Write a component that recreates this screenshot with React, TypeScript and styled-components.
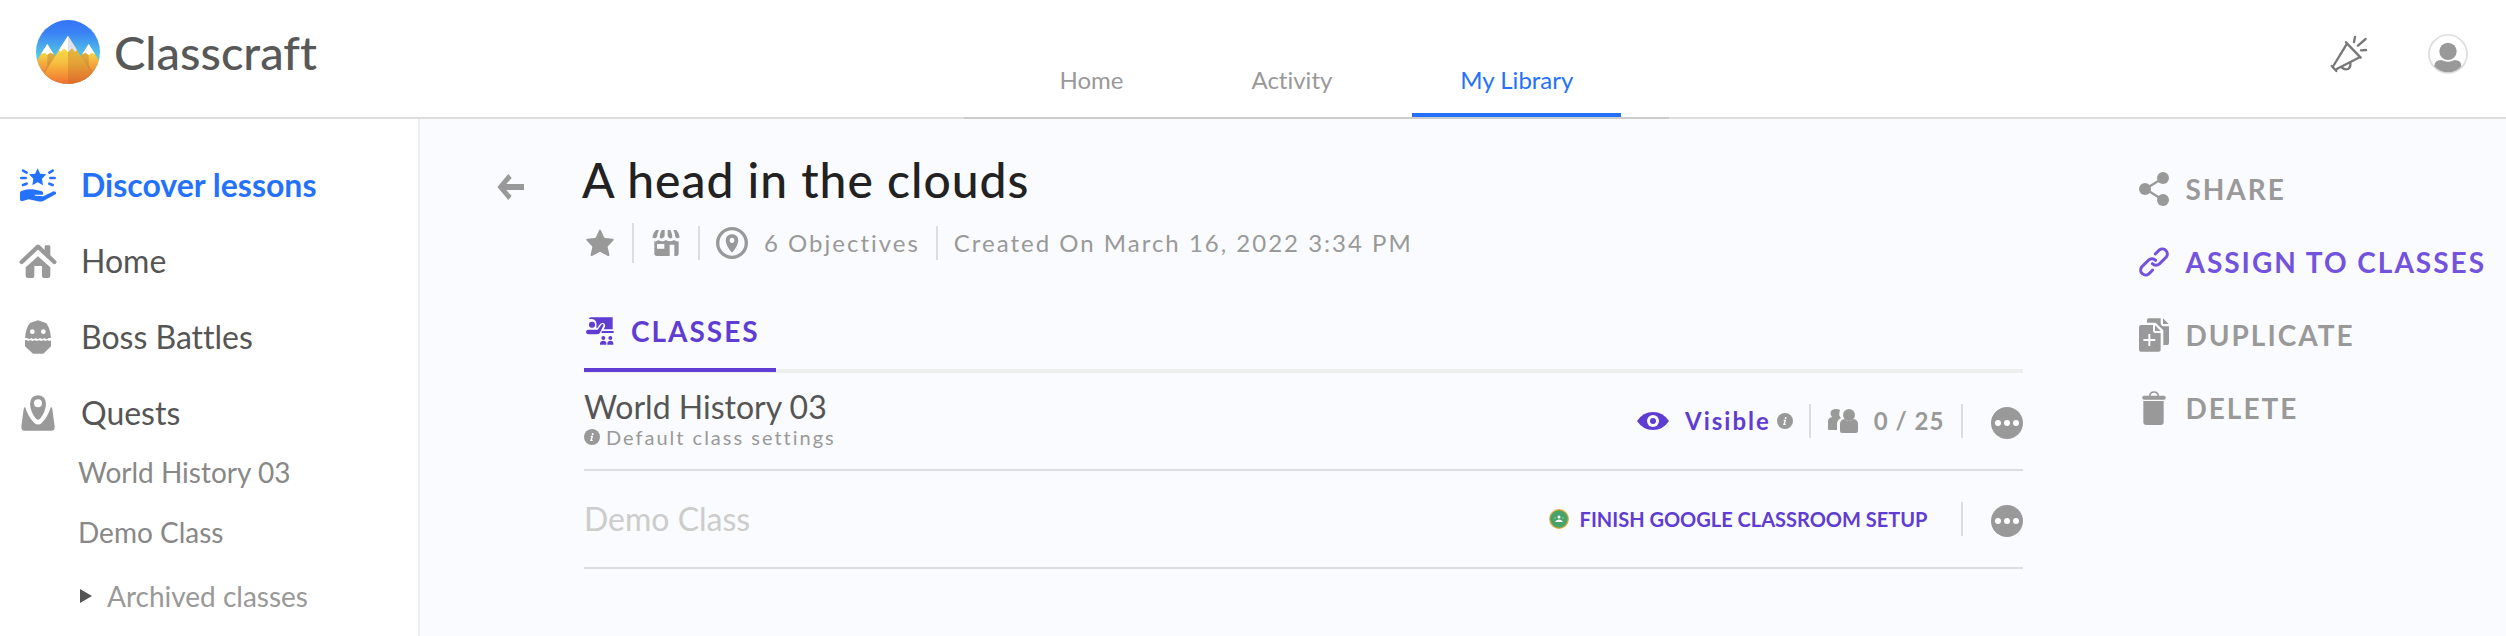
import React from "react";
import styled, { createGlobalStyle } from "styled-components";

const grey = "#999999";
const purple = "#5f3dd3";
const blue = "#2472fb";

const GlobalStyle = createGlobalStyle`
  *, *::before, *::after { box-sizing: border-box; }
  body {
    margin: 0;
    background: #fafbfe;
    font-family: Lato, "Liberation Sans", sans-serif;
    font-variant-ligatures: none;
    color: #555555;
  }
  a { color: inherit; text-decoration: none; }
  button {
    font: inherit; font-variant-ligatures: none; color: inherit; letter-spacing: inherit;
    background: none; border: 0; padding: 0; cursor: pointer;
  }
  h1, h2, ul, p { margin: 0; padding: 0; }
  ul { list-style: none; }
  svg { display: block; flex: none; }
`;

const Page = styled.div`
  display: flex;
  flex-direction: column;
  min-height: 100vh;
`;

const Header = styled.header`
  display: flex;
  justify-content: space-between;
  height: 119px;
  padding: 0 38px 0 36px;
  background: #ffffff;
  border-bottom: 2px solid #dddddd;
`;

const Brand = styled.a`
  display: flex;
  align-items: center;
  align-self: flex-start;
  gap: 14px;
  margin-top: 20px;
  font-size: 47px;
  line-height: 64px;
  font-weight: 500;
  color: #585858;
`;

const Tabs = styled.nav`
  display: flex;
  align-self: flex-end;
  gap: 32px;
  padding: 0 48px;
  margin-bottom: -2px;
  border-bottom: 2px solid #cccccc;
`;

const Tab = styled.a<{ $active?: boolean }>`
  padding: 0 48px 18px;
  font-size: 24px;
  line-height: 30px;
  color: ${(p) => (p.$active ? blue : grey)};
  border-bottom: 4px solid ${(p) => (p.$active ? blue : "transparent")};
`;

const HeaderTools = styled.div`
  display: flex;
  align-items: center;
  align-self: flex-start;
  gap: 60px;
  margin-top: 34px;
  padding-left: 14px;
`;

const Body = styled.div`
  display: flex;
  flex: 1;
`;

const Sidebar = styled.aside`
  flex: none;
  width: 420px;
  padding: 28px 18px 0;
  background: #ffffff;
  border-right: 2px solid #eeeeee;
`;

const SideLink = styled.a<{ $active?: boolean }>`
  display: flex;
  align-items: center;
  gap: 23px;
  padding: 18px 0;
  font-size: 32px;
  line-height: 40px;
  font-weight: ${(p) => (p.$active ? 700 : 400)};
  color: ${(p) => (p.$active ? blue : "#555555")};
`;

const SideIcon = styled.span<{ $active?: boolean }>`
  display: flex;
  justify-content: center;
  width: 40px;
  color: ${(p) => (p.$active ? blue : grey)};
`;

const SubList = styled.ul`
  display: flex;
  flex-direction: column;
  gap: 26px;
  padding: 4px 0 0 60px;
  font-size: 28px;
  line-height: 34px;
  color: #888888;
`;

const Archived = styled.button`
  display: flex;
  align-items: center;
  gap: 15px;
  padding: 4px 0 0 2px;
  color: ${grey};
`;

const Main = styled.main`
  display: grid;
  flex: 1;
  grid-template-columns: 87px minmax(0, 1fr) auto;
  align-items: start;
  padding: 32px 20px 32px 77px;
`;

const Back = styled.button`
  justify-self: start;
  margin-top: 23px;
  color: ${grey};
`;

const Content = styled.section`
  margin-right: 116px;
`;

const Title = styled.h1`
  font-size: 48px;
  line-height: 58px;
  font-weight: 500;
  letter-spacing: 1px;
  color: #222222;
  margin-left: -2px;
`;

const Meta = styled.div`
  display: flex;
  align-items: center;
  gap: 16px;
  margin-top: 14px;
  padding-left: 2px;
  font-size: 24px;
  line-height: 30px;
  letter-spacing: 2px;
  color: ${grey};
`;

const MetaBadges = styled.span`
  display: flex;
  align-items: center;
  gap: 18px;
`;

const Divider = styled.span<{ $tall?: boolean }>`
  flex: none;
  width: 2px;
  height: ${(p) => (p.$tall ? 40 : 34)}px;
  background: #dcdde0;
`;

const SectionTabs = styled.div`
  display: flex;
  margin-top: 51px;
  border-bottom: 4px solid #eeeeee;
`;

const SectionTab = styled.button`
  display: flex;
  align-items: center;
  gap: 17px;
  margin-bottom: -3px;
  padding: 0 16px 20px 2px;
  font-size: 28px;
  line-height: 34px;
  font-weight: 700;
  letter-spacing: 2px;
  color: ${purple};
  border-bottom: 4px solid ${purple};
`;

const ClassRow = styled.li`
  display: flex;
  align-items: center;
  justify-content: space-between;
  min-height: 98px;
  border-bottom: 2px solid #dcdde0;
`;

const ClassName = styled.h2<{ $muted?: boolean }>`
  font-size: 32px;
  line-height: 36px;
  font-weight: 400;
  color: ${(p) => (p.$muted ? "#cccccc" : "#555555")};
`;

const ClassInfo = styled.div`
  padding-bottom: 4px;
`;

const ClassNote = styled.p`
  display: flex;
  align-items: center;
  gap: 6px;
  font-size: 20px;
  line-height: 24px;
  letter-spacing: 2px;
  color: ${grey};
`;

const RowTools = styled.div`
  display: flex;
  align-items: center;
`;

const Visibility = styled.button`
  display: flex;
  align-items: center;
  gap: 16px;
  font-size: 24px;
  line-height: 30px;
  font-weight: 700;
  letter-spacing: 2px;
  color: ${purple};
`;

const InfoSlot = styled.span`
  margin: 0 16px 0 6px;
  color: ${grey};
`;

const Students = styled.span`
  display: flex;
  align-items: center;
  gap: 16px;
  margin: 0 17px;
  font-size: 24px;
  line-height: 30px;
  font-weight: 700;
  letter-spacing: 1px;
  color: ${grey};
`;

const Setup = styled.button`
  display: flex;
  align-items: center;
  gap: 11px;
  margin-right: 34px;
  font-size: 20px;
  line-height: 24px;
  font-weight: 700;
  color: ${purple};
`;

const More = styled.button`
  margin: 4px 0 0 28px;
`;

const Actions = styled.ul`
  display: flex;
  flex-direction: column;
  gap: 39px;
  margin-top: 21px;
`;

const Action = styled.button<{ $accent?: boolean }>`
  display: flex;
  align-items: center;
  gap: 16px;
  font-size: 28px;
  line-height: 34px;
  font-weight: 700;
  letter-spacing: 2px;
  color: ${(p) => (p.$accent ? "#7352dd" : grey)};
`;

const Logo = () => (
  <svg width="64" height="64" viewBox="109 60 192 192" aria-hidden="true">
    <defs>
      <linearGradient id="sky" x1="0" y1="0" x2="0" y2="1">
        <stop offset="0" stopColor="#3474f7" />
        <stop offset="0.2" stopColor="#3a82f5" />
        <stop offset="0.55" stopColor="#52c6e6" />
      </linearGradient>
      <linearGradient id="rock" gradientUnits="userSpaceOnUse" x1="0" y1="145" x2="0" y2="252">
        <stop offset="0" stopColor="#f3dc4a" />
        <stop offset="0.4" stopColor="#f7bf40" />
        <stop offset="1" stopColor="#f0702f" />
      </linearGradient>
      <linearGradient id="rockSide" gradientUnits="userSpaceOnUse" x1="0" y1="150" x2="0" y2="225">
        <stop offset="0" stopColor="#f8e24a" />
        <stop offset="1" stopColor="#ef7c34" />
      </linearGradient>
      <clipPath id="disc"><circle cx="205" cy="156" r="96" /></clipPath>
    </defs>
    <g clipPath="url(#disc)">
      <rect x="109" y="60" width="192" height="192" fill="url(#sky)" />
      <path d="M143 132 L90 216 V252 H196 V216Z M267 132 L214 216 V252 H320 V216Z" fill="url(#rockSide)" />
      <path d="M143 132 L196 216 V252 L125 240 L143 195Z M267 132 L214 216 L250 252 H296 L267 195Z" fill="#a8702c" opacity="0.35" />
      <path d="M143 132 L124 162 L135 158 L143 165 L151 158 L162 162Z M267 132 L248 162 L258 158 L267 165 L276 158 L286 162Z" fill="#ffffff" />
      <path d="M205 107 L114 252 H296Z" fill="url(#rock)" />
      <path d="M205 107 L296 252 H205Z" fill="#b35c20" opacity="0.28" />
      <path d="M205 107 L178 150 L184 156 L193 145 L205 157Z" fill="#ffffff" />
      <path d="M205 107 L232 150 L226 156 L217 145 L205 157Z" fill="#e3e0ee" />
    </g>
  </svg>
);

const MegaphoneIcon = () => (
  <svg width="38" height="38" viewBox="688 105 114 114" fill="none" stroke="#777777" strokeWidth="7" strokeLinecap="round" strokeLinejoin="round" aria-hidden="true">
    <path d="M736 127 L780 173 M739 131 L698 198 M777 172 L708 207 M693 198 L707 213" />
    <path d="M724 203 Q732 210 742 207 Q751 202 749 188" />
    <path d="M763 111 L760 126 M795 117 L772 137 M781 151 L796 150" />
  </svg>
);

const AvatarIcon = () => (
  <svg width="40" height="40" viewBox="984 101 120 120" aria-hidden="true">
    <circle cx="1044" cy="161" r="57" fill="#ffffff" stroke="#dddddd" strokeWidth="5" />
    <circle cx="1044" cy="153" r="26" fill={grey} />
    <path d="M1003 198 Q1003 179 1024 179 Q1044 190 1064 179 Q1084 179 1084 198 Q1068 216 1044 216 Q1020 216 1003 198Z" fill={grey} />
  </svg>
);

const DiscoverIcon = () => (
  <svg width="38" height="34" viewBox="57 500 114 102" fill="currentColor" aria-hidden="true">
    <path d="M113 501 L120.500 517 L139 519 L126 532 L129 552 L113 543 L97 552 L100 532 L87 519 L105.500 517Z" />
    <path d="M69 508 L80 514 M64 530 H77 M69 551 L80 547 M158 508 L148 514 M164 530 H151 M158 551 L148 547" stroke="currentColor" strokeWidth="8" strokeLinecap="round" />
    <path d="M60 574 Q60 569 66 568 Q84 563 98 564 L124 569 Q133 574 128 580 L104 580 L105 583 L130 585 L161 570 Q170 571 168 578 L130 599 Q122 602 114 600 L86 594 L66 600 Q60 600 60 594Z" />
  </svg>
);

const HomeIcon = () => (
  <svg width="38" height="34" viewBox="57 735 114 102" fill="currentColor" aria-hidden="true">
    <path d="M65 789 L114 743 L163 789" fill="none" stroke="currentColor" strokeWidth="13" strokeLinecap="round" strokeLinejoin="round" />
    <path d="M134 760 V743 Q134 739 138 739 H147 Q151 739 151 743 V774Z" />
    <path d="M114 772 L151 805 V830 Q151 837 144 837 H132 Q126 837 126 831 V801 H103 V831 Q103 837 97 837 H84 Q77 837 77 830 V805Z" />
  </svg>
);

const BossIcon = () => (
  <svg width="26" height="34" viewBox="75 64 78 102" fill="currentColor" aria-hidden="true">
    <path d="M75 118 Q77 88 90 73 L114 65 L138 73 Q151 88 153 118 L146 118 Q140 124 133 118 Q127 124 120 118 Q114 124 107 118 Q101 124 94 118 Q88 124 81 118Z" />
    <path d="M75 125 Q80 122 84 127 Q92 123 97 127 Q104 123 110 127 Q117 123 123 127 Q130 123 136 127 Q143 123 148 127 L153 125 V143 L130 165 H99 L75 143Z" />
    <circle cx="97" cy="99" r="7" fill="#ffffff" />
    <circle cx="130" cy="99" r="7" fill="#ffffff" />
  </svg>
);

const QuestIcon = () => (
  <svg width="34" height="36" viewBox="63 288 102 108" fill="currentColor" aria-hidden="true">
    <path fillRule="evenodd" d="M114 289 Q138 291 138 315 Q136 342 119 360 Q114 364 109 360 Q92 342 90 315 Q90 291 114 289Z M114 301 A12 12 0 1 0 114 325 A12 12 0 1 0 114 301Z" />
    <path d="M75 323 Q84 352 102 371 Q114 382 126 371 Q144 352 153 323 Q156 325 157 330 L164 383 Q165 395 154 395 H74 Q63 395 64 383 L71 330 Q72 325 75 323Z" />
  </svg>
);

const TriangleIcon = () => (
  <svg width="12" height="14" viewBox="0 0 12 14" aria-hidden="true">
    <path d="M0 0 L12 7 L0 14Z" fill="#555555" />
  </svg>
);

const BackIcon = () => (
  <svg width="27" height="26" viewBox="51 132 81 78" fill="currentColor" aria-hidden="true">
    <path d="M52 171 L85 132 L95 144 L79 162 H132 V180 H79 L95 198 L85 210Z" />
  </svg>
);

const StarIcon = () => (
  <svg width="28" height="28" viewBox="317 300 86 84" fill="currentColor" aria-hidden="true">
    <path d="M360 304 L370 326 Q372 329 376 330 L399 332 L382 350 Q380 353 381 357 L386 379 L363 367 Q360 366 357 367 L334 379 L339 357 Q340 353 338 350 L321 332 L344 330 Q348 329 350 326Z" stroke="currentColor" strokeWidth="6" strokeLinejoin="round" />
  </svg>
);

const StoreIcon = () => (
  <svg width="28" height="28" viewBox="516 301 84 82" fill="currentColor" aria-hidden="true">
    <path d="M528 303 H537 Q532 314 531 324 Q525 331 517 325 Q518 312 528 303Z M545 303 H554 V322 Q548 332 539 326 Q539 314 545 303Z M563 303 H571 Q577 314 577 326 Q569 332 563 322Z M580 303 H589 Q598 312 599 325 Q592 331 586 324 Q585 314 580 303Z" />
    <path fillRule="evenodd" d="M523 337 Q529 338 535 333 Q546 341 558 333 Q570 341 582 333 Q589 338 596 337 V374 Q596 381 589 381 H583 V347 H569 V381 H530 Q523 381 523 374Z M531 345 V359 H553 V345Z" />
  </svg>
);

const ObjectiveIcon = () => (
  <svg width="32" height="32" viewBox="708 294 96 96" aria-hidden="true">
    <circle cx="756" cy="342" r="43" fill="none" stroke="currentColor" strokeWidth="10" />
    <path fill="currentColor" fillRule="evenodd" d="M756 315 Q775 317 775 335 Q772 354 756 371 Q740 354 737 335 Q737 317 756 315Z M756 326 A7 8 0 1 0 756 342 A7 8 0 1 0 756 326Z" />
  </svg>
);

const ClassesIcon = () => (
  <svg width="28" height="28" viewBox="318 555 84 84" fill="currentColor" aria-hidden="true">
    <path d="M327 561 Q327 556 332 556 H398 V592 H371 L375 584 Q377 574 368 573 Q362 573 358 579 L352 588 L349 587 Q353 563 336 561Z" />
    <rect x="327" y="569" width="18" height="18" rx="8" />
    <path d="M318 600 Q318 593 325 593 H353 L365 577 Q369 575 371 579 L360 602 Q357 607 350 607 H324 Q318 606 318 600Z" />
    <path d="M366 597 H401 V603 H364Z" />
    <circle cx="370" cy="618" r="6" />
    <circle cx="391" cy="618" r="6" />
    <path d="M360 638 V634 Q361 626 370 626 Q379 626 379 634 V638Z M382 638 V634 Q383 626 391 626 Q400 626 400 634 V638Z" />
  </svg>
);

const InfoIcon = () => (
  <svg width="16" height="16" viewBox="0 0 48 48" aria-hidden="true">
    <circle cx="24" cy="24" r="24" fill={grey} />
    <circle cx="26" cy="15" r="3" fill="#ffffff" />
    <path d="M20 22 H25 L21 34 H26" fill="none" stroke="#ffffff" strokeWidth="4" />
  </svg>
);

const EyeIcon = () => (
  <svg width="32" height="20" viewBox="0 0 32 20" aria-hidden="true">
    <path d="M0 10 Q6 1 16 1 Q26 1 32 10 Q26 19 16 19 Q6 19 0 10Z" fill="currentColor" />
    <circle cx="16" cy="10" r="6" fill="#fafbfe" />
    <circle cx="16" cy="10" r="3" fill="currentColor" />
  </svg>
);

const PeopleIcon = () => (
  <svg width="30" height="24" viewBox="0 0 30 24" fill="currentColor" aria-hidden="true">
    <path d="M8 0 Q11 0 12 1 Q10 6 13 9 Q9 11 9 15 V21 H1 Q0 21 0 20 V12 Q0 9 4 8 Q1 4 4 1 Q6 0 8 0Z" />
    <circle cx="21" cy="6" r="6" />
    <path d="M12 22 V15 Q12 11 16 10 Q21 14 26 10 Q30 11 30 15 V22 Q30 24 28 24 H14 Q12 24 12 22Z" />
  </svg>
);

const MoreIcon = () => (
  <svg width="32" height="32" viewBox="0 0 32 32" aria-hidden="true">
    <circle cx="16" cy="16" r="16" fill={grey} />
    <circle cx="7" cy="16" r="3" fill="#ffffff" />
    <circle cx="16" cy="16" r="3" fill="#ffffff" />
    <circle cx="25" cy="16" r="3" fill="#ffffff" />
  </svg>
);

const ClassroomIcon = () => (
  <svg width="20" height="20" viewBox="0 0 20 20" aria-hidden="true">
    <circle cx="10" cy="10" r="9.300" fill="#48a26a" stroke="#dcae3d" strokeWidth="1.200" />
    <circle cx="10" cy="8" r="1.500" fill="#ffffff" />
    <path d="M6 13 Q7 10.500 10 10.500 Q13 10.500 14 13Z" fill="#ffffff" />
    <circle cx="6" cy="9" r="1" fill="#78bb92" />
    <circle cx="14" cy="9" r="1" fill="#78bb92" />
  </svg>
);

const ShareIcon = () => (
  <svg width="30" height="34" viewBox="123 510 90 102" aria-hidden="true">
    <path d="M194 529 L142 561 L194 593" fill="none" stroke="currentColor" strokeWidth="7" />
    <g fill="currentColor">
      <circle cx="195" cy="528" r="18" />
      <circle cx="141" cy="561" r="18" />
      <circle cx="195" cy="594" r="18" />
    </g>
  </svg>
);

const LinkIcon = () => (
  <svg width="30" height="30" viewBox="123 738 90 90" fill="none" stroke="currentColor" strokeWidth="9" strokeLinecap="round" aria-hidden="true">
    <path d="M172 759 L184 747 A15 15 0 0 1 205 768 L185 788 A16 16 0 0 1 163 788" />
    <path d="M164 807 L152 819 A15 15 0 0 1 131 798 L151 778 A16 16 0 0 1 173 778" />
  </svg>
);

const DuplicateIcon = () => (
  <svg width="30" height="34" viewBox="123 951 90 102" fill="currentColor" aria-hidden="true">
    <path fillRule="evenodd" d="M129 972 H165 V990 Q165 996 171 996 H188 V1046 Q188 1052 182 1052 H129 Q123 1052 123 1046 V978 Q123 972 129 972Z M151 999 V1014 H136 V1020 H151 V1035 H157 V1020 H172 V1014 H157 V999Z" />
    <path d="M171 973 L188 990 H171Z M195 952 L212 969 H195Z" />
    <path d="M147 965 V957 Q147 952 152 952 H188 V968 Q190 976 198 976 H213 V1026 Q213 1032 207 1032 H196 V988 L173 965Z" />
  </svg>
);

const TrashIcon = () => (
  <svg width="30" height="34" viewBox="123 1173 90 102" fill="currentColor" aria-hidden="true">
    <path d="M155 1189 Q156 1176 168 1176 Q180 1176 181 1189" fill="none" stroke="currentColor" strokeWidth="5" />
    <rect x="133" y="1187" width="70" height="12" rx="5" />
    <path d="M136 1203 H197 V1266 Q197 1275 188 1275 H145 Q136 1275 136 1266Z" />
  </svg>
);

const sideItems = [
  { label: "Discover lessons", icon: <DiscoverIcon />, active: true },
  { label: "Home", icon: <HomeIcon /> },
  { label: "Boss Battles", icon: <BossIcon /> },
  { label: "Quests", icon: <QuestIcon /> },
];

const actions = [
  { label: "SHARE", icon: <ShareIcon /> },
  { label: "ASSIGN TO CLASSES", icon: <LinkIcon />, accent: true },
  { label: "DUPLICATE", icon: <DuplicateIcon /> },
  { label: "DELETE", icon: <TrashIcon /> },
];

export default function App() {
  return (
    <Page>
      <GlobalStyle />
      <Header>
        <Brand href="#"><Logo />Classcraft</Brand>
        <Tabs aria-label="Primary">
          <Tab href="#">Home</Tab>
          <Tab href="#">Activity</Tab>
          <Tab href="#" $active aria-current="page">My Library</Tab>
        </Tabs>
        <HeaderTools>
          <button aria-label="Announcements"><MegaphoneIcon /></button>
          <button aria-label="Profile"><AvatarIcon /></button>
        </HeaderTools>
      </Header>
      <Body>
        <Sidebar>
          <nav aria-label="Sections">
            {sideItems.map((item) => (
              <SideLink href="#" key={item.label} $active={item.active}>
                <SideIcon $active={item.active}>{item.icon}</SideIcon>
                {item.label}
              </SideLink>
            ))}
            <SubList>
              <li><a href="#">World History 03</a></li>
              <li><a href="#">Demo Class</a></li>
              <li><Archived><TriangleIcon />Archived classes</Archived></li>
            </SubList>
          </nav>
        </Sidebar>
        <Main>
          <Back aria-label="Back"><BackIcon /></Back>
          <Content>
            <Title>A head in the clouds</Title>
            <Meta>
              <MetaBadges>
                <StarIcon />
                <Divider $tall />
                <StoreIcon />
                <Divider />
              </MetaBadges>
              <ObjectiveIcon />
              <span>6 Objectives</span>
              <Divider />
              <span>Created On March 16, 2022 3:34 PM</span>
            </Meta>
            <SectionTabs>
              <SectionTab><ClassesIcon />CLASSES</SectionTab>
            </SectionTabs>
            <ul>
              <ClassRow>
                <ClassInfo>
                  <ClassName>World History 03</ClassName>
                  <ClassNote><InfoIcon />Default class settings</ClassNote>
                </ClassInfo>
                <RowTools>
                  <Visibility><EyeIcon />Visible</Visibility>
                  <InfoSlot><InfoIcon /></InfoSlot>
                  <Divider />
                  <Students><PeopleIcon />0 / 25</Students>
                  <Divider />
                  <More aria-label="More options for World History 03"><MoreIcon /></More>
                </RowTools>
              </ClassRow>
              <ClassRow>
                <ClassName $muted>Demo Class</ClassName>
                <RowTools>
                  <Setup><ClassroomIcon />FINISH GOOGLE CLASSROOM SETUP</Setup>
                  <Divider />
                  <More aria-label="More options for Demo Class"><MoreIcon /></More>
                </RowTools>
              </ClassRow>
            </ul>
          </Content>
          <Actions>
            {actions.map((a) => (
              <li key={a.label}>
                <Action $accent={a.accent}>{a.icon}{a.label}</Action>
              </li>
            ))}
          </Actions>
        </Main>
      </Body>
    </Page>
  );
}
